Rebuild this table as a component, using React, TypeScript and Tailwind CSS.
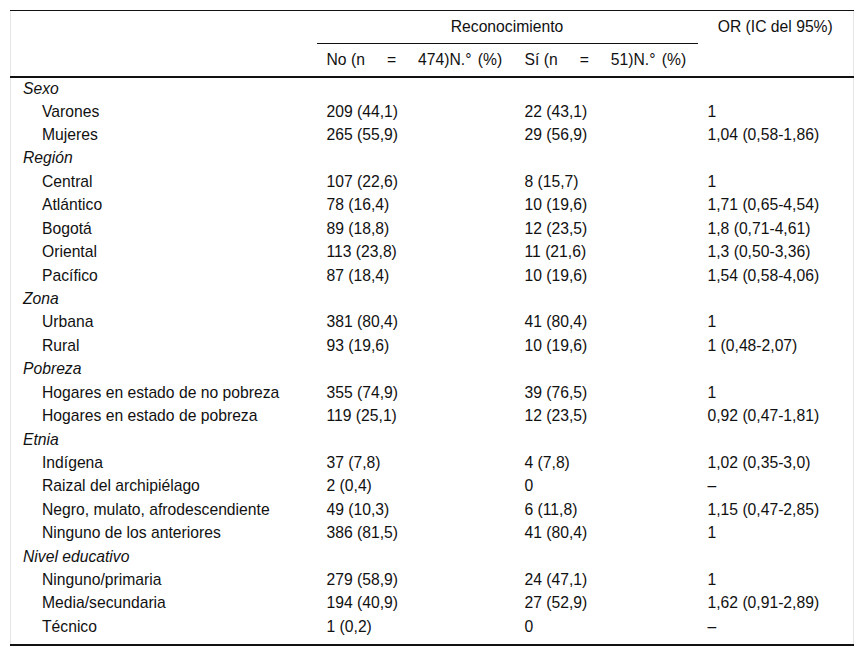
import React from 'react'

type Row = { label: string; group?: boolean; no?: string; si?: string; or?: string }

const rows: Row[] = [
  { label: "Sexo", group: true },
  { label: "Varones", no: "209 (44,1)", si: "22 (43,1)", or: "1" },
  { label: "Mujeres", no: "265 (55,9)", si: "29 (56,9)", or: "1,04 (0,58-1,86)" },
  { label: "Región", group: true },
  { label: "Central", no: "107 (22,6)", si: "8 (15,7)", or: "1" },
  { label: "Atlántico", no: "78 (16,4)", si: "10 (19,6)", or: "1,71 (0,65-4,54)" },
  { label: "Bogotá", no: "89 (18,8)", si: "12 (23,5)", or: "1,8 (0,71-4,61)" },
  { label: "Oriental", no: "113 (23,8)", si: "11 (21,6)", or: "1,3 (0,50-3,36)" },
  { label: "Pacífico", no: "87 (18,4)", si: "10 (19,6)", or: "1,54 (0,58-4,06)" },
  { label: "Zona", group: true },
  { label: "Urbana", no: "381 (80,4)", si: "41 (80,4)", or: "1" },
  { label: "Rural", no: "93 (19,6)", si: "10 (19,6)", or: "1 (0,48-2,07)" },
  { label: "Pobreza", group: true },
  { label: "Hogares en estado de no pobreza", no: "355 (74,9)", si: "39 (76,5)", or: "1" },
  { label: "Hogares en estado de pobreza", no: "119 (25,1)", si: "12 (23,5)", or: "0,92 (0,47-1,81)" },
  { label: "Etnia", group: true },
  { label: "Indígena", no: "37 (7,8)", si: "4 (7,8)", or: "1,02 (0,35-3,0)" },
  { label: "Raizal del archipiélago", no: "2 (0,4)", si: "0", or: "–" },
  { label: "Negro, mulato, afrodescendiente", no: "49 (10,3)", si: "6 (11,8)", or: "1,15 (0,47-2,85)" },
  { label: "Ninguno de los anteriores", no: "386 (81,5)", si: "41 (80,4)", or: "1" },
  { label: "Nivel educativo", group: true },
  { label: "Ninguno/primaria", no: "279 (58,9)", si: "24 (47,1)", or: "1" },
  { label: "Media/secundaria", no: "194 (40,9)", si: "27 (52,9)", or: "1,62 (0,91-2,89)" },
  { label: "Técnico", no: "1 (0,2)", si: "0", or: "–" },
]

function App() {
  return (
    <div className="bg-white w-[864px] h-[657px] pt-[10px] pl-[10px] text-[15.7px] leading-[18px] text-[#111] font-['Liberation_Sans',Arial,sans-serif]">
      <table className="w-[843px] table-fixed border-collapse border-x border-[#e6e6e6]">
        <colgroup>
          <col className="w-[306px]" />
          <col className="w-[198px]" />
          <col className="w-[183px]" />
          <col className="w-[156px]" />
        </colgroup>
        <thead>
          <tr className="h-[33px] border-t border-[#111]">
            <th className="p-0" />
            <th colSpan={2} className="p-0 font-normal text-center align-middle border-b-[1.5px] border-[#111]">
              Reconocimiento
            </th>
            <th className="p-0 font-normal text-center align-middle">OR (IC del 95%)</th>
          </tr>
          <tr className="h-[33px] border-b-2 border-[#111]">
            <th className="p-0" />
            <th className="p-0 pl-[10px] font-normal text-left align-middle whitespace-nowrap">
              No (n<span className="mx-[22px]">=</span>474)N.°&nbsp;<span className="ml-[2px]">(%)</span>
            </th>
            <th className="p-0 pl-[10px] font-normal text-left align-middle whitespace-nowrap">
              Sí (n<span className="mx-[22px]">=</span>51)N.°&nbsp;<span className="ml-[2px]">(%)</span>
            </th>
            <th className="p-0" />
          </tr>
        </thead>
        <tbody className="border-b-2 border-[#111]">
          {rows.map((r, i) => {
            const last = i === rows.length - 1
            return (
              <tr key={i} className={last ? "h-[30px] align-top" : "h-[23.43px]"}>
                <td className={`p-0 whitespace-nowrap ${r.group ? "pl-[12px] italic" : "pl-[31px]"} ${last ? "pt-[3px]" : ""}`}>
                  {r.label}
                </td>
                <td className={`p-0 pl-[10px] ${last ? "pt-[3px]" : ""}`}>{r.no}</td>
                <td className={`p-0 pl-[10px] ${last ? "pt-[3px]" : ""}`}>{r.si}</td>
                <td className={`p-0 pl-[10px] ${last ? "pt-[3px]" : ""}`}>{r.or}</td>
              </tr>
            )
          })}
        </tbody>
      </table>
    </div>
  )
}

export default App
